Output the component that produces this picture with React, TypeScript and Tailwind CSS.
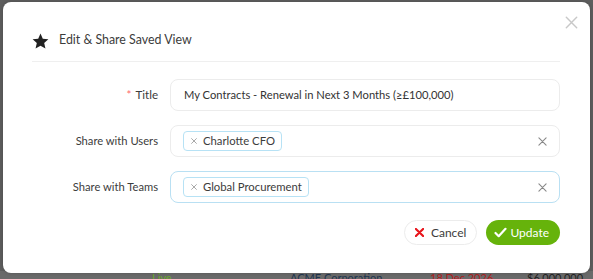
import React from "react";

function Star() {
  return (
    <svg width="17" height="16" viewBox="0 0 24 23" className="shrink-0">
      <path d="M12 0.8l3.3 7.4 8 .8-6 5.4 1.8 7.9L12 18.2l-7.1 4.1 1.8-7.9-6-5.4 8-.8z" fill="#222" />
    </svg>
  );
}

function X({ size, color, sw }: { size: number; color: string; sw: number }) {
  return (
    <svg width={size} height={size} viewBox="0 0 10 10">
      <path d="M1 1L9 9M9 1L1 9" stroke={color} strokeWidth={sw} strokeLinecap="round" />
    </svg>
  );
}

function Tag({ label }: { label: string }) {
  return (
    <div className="flex items-center h-[20px] pl-[7px] pr-[6px] gap-[6px] rounded-[4px] border border-[#b7e2f5] bg-white">
      <X size={6} color="#999" sw={1.4} />
      <span className="text-[11.3px] text-[#3c3c3c]">{label}</span>
    </div>
  );
}

export default function App() {
  return (
    <div
      className="relative w-[593px] h-[279px] bg-[#5e5e5e] overflow-hidden"
      style={{ fontFamily: "Lato, 'Open Sans', sans-serif" }}
    >
      {/* background table row peeking */}
      <div className="absolute left-0 top-[271px] w-full h-[8px] bg-[#6a6a6a] text-[11px] leading-none">
        <span className="absolute left-[152px] top-[1px] text-[#6bab2c]">Live</span>
        <span className="absolute left-[290px] top-[1px] text-[#1f3550]">ACME Corporation</span>
        <span className="absolute left-[430px] top-[1px] text-[#b32020]">18 Dec 2026</span>
        <span className="absolute left-[527px] top-[1px] text-[#222]">$6,000,000</span>
      </div>
      <div className="absolute left-[3px] top-[2px] w-[587px] h-[271px] bg-white rounded-[8px] shadow-[0_0_4px_rgba(0,0,0,0.2)]">
        <div className="absolute right-[12px] top-[14px]">
          <X size={13} color="#c8c8c8" sw={1.1} />
        </div>
        <div className="pl-[29px] pr-[30px] pt-[29px]">
          <div className="flex items-center gap-[10px] h-[19px]">
            <Star />
            <span className="text-[12.4px] text-[#3c3c3c]">Edit &amp; Share Saved View</span>
          </div>
          <div className="mt-[11px] h-px bg-[#efefef]" />
          <div className="mt-[17px] flex flex-col gap-[14px]">
            <div className="flex items-center">
              <div className="w-[126px] text-right text-[11.6px] text-[#3c3c3c]">
                <span className="text-[#ff6b6b] mr-[4px]">*</span>Title
              </div>
              <div className="ml-[12px] flex-1 h-[32px] rounded-[8px] border border-[#ececec] flex items-center px-[13px] text-[11.2px] text-[#333]">
                My Contracts - Renewal in Next 3 Months (≥£100,000)
              </div>
            </div>
            <div className="flex items-center">
              <div className="w-[126px] text-right text-[11.2px] text-[#3c3c3c]">Share with Users</div>
              <div className="ml-[12px] flex-1 h-[32px] rounded-[8px] border border-[#ececec] flex items-center pl-[12px] pr-[12px]">
                <Tag label="Charlotte CFO" />
                <div className="ml-auto">
                  <X size={9} color="#888" sw={1.2} />
                </div>
              </div>
            </div>
            <div className="flex items-center">
              <div className="w-[126px] text-right text-[11.2px] text-[#3c3c3c]">Share with Teams</div>
              <div className="ml-[12px] flex-1 h-[32px] rounded-[8px] border border-[#b9e0f3] flex items-center pl-[12px] pr-[12px]">
                <Tag label="Global Procurement" />
                <div className="ml-auto">
                  <X size={9} color="#888" sw={1.2} />
                </div>
              </div>
            </div>
          </div>
          <div className="mt-[17px] flex justify-end gap-[9px]">
            <button className="h-[25px] pl-[10px] pr-[10px] rounded-full border border-[#ececec] flex items-center gap-[7px] text-[12px] text-[#3c3c3c]">
              <X size={9} color="#e8141b" sw={2.4} />
              Cancel
            </button>
            <button className="h-[25px] pl-[8px] pr-[11px] rounded-full bg-[#66b30b] flex items-center gap-[3px] text-[12px] text-white">
              <svg width="13" height="11" viewBox="0 0 13 11">
                <path d="M1.5 6l3.2 3.2L11.5 1.8" stroke="white" strokeWidth="2.2" fill="none" strokeLinecap="round" strokeLinejoin="round" />
              </svg>
              Update
            </button>
          </div>
        </div>
      </div>
    </div>
  );
}
